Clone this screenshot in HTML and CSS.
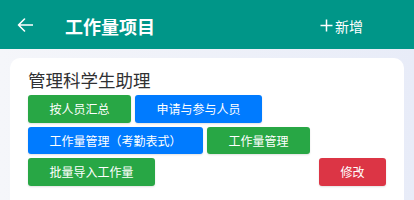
FILE: index.html
```html
<!DOCTYPE html>
<html lang="zh-CN">
<head>
<meta charset="utf-8">
<title>工作量项目</title>
<link rel="stylesheet" href="styles.css">
</head>
<body>
<header class="topbar">
  <span class="back">
    <svg width="16" height="14" viewBox="0 0 16 14"><path d="M15.5 7H1.5M7.5 1L1.5 7L7.5 13" fill="none" stroke="#fff" stroke-width="1.6" stroke-linecap="round" stroke-linejoin="round"/></svg>
  </span>
  <h1 class="title">工作量项目</h1>
  <span class="add">
    <svg class="plus" width="13" height="13" viewBox="0 0 13 13"><path d="M6.5 0.5V12.5M0.5 6.5H12.5" fill="none" stroke="#fff" stroke-width="1.5"/></svg>
    <span>新增</span>
  </span>
</header>
<main class="content">
  <section class="card">
    <h2 class="card-title">管理科学生助理</h2>
    <div class="actions">
      <button class="btn btn-green">按人员汇总</button>
      <button class="btn btn-blue">申请与参与人员</button>
      <button class="btn btn-blue">工作量管理（考勤表式）</button>
      <button class="btn btn-green">工作量管理</button>
      <button class="btn btn-green">批量导入工作量</button>
      <button class="btn btn-red btn-end">修改</button>
    </div>
  </section>
</main>
</body>
</html>
```
FILE: styles.css
```css
* { box-sizing: border-box; }
html, body { margin: 0; padding: 0; }
body {
  width: 414px;
  height: 200px;
  overflow: hidden;
  font-family: "Noto Sans CJK SC", "Noto Sans", sans-serif;
  background: linear-gradient(90deg, #f5f6fa 0%, #e8ecf8 100%);
}
.topbar {
  height: 49px;
  background: #009688;
  display: flex;
  align-items: center;
  padding: 0 51px 0 17px;
  color: #fff;
}
.back { display: flex; align-items: center; width: 16px; }
.title {
  margin: 0 0 0 32px;
  font-size: 18px;
  font-weight: 700;
  line-height: 24px;
  padding-top: 3px;
}
.add {
  margin-left: auto;
  display: flex;
  align-items: center;
  font-size: 14px;
  line-height: 20px;
  padding-top: 2px;
}
.plus { margin-right: 2px; }
.content { padding: 9px 10px 0; }
.card {
  background: #fff;
  border-radius: 10px;
  padding: 10px 18px 40px;
}
.card-title {
  margin: 0 0 3px;
  font-size: 17.5px;
  font-weight: 400;
  line-height: 24px;
  color: #303133;
}
.actions {
  display: flex;
  flex-wrap: wrap;
  gap: 4px;
}
.btn {
  height: 27.5px;
  padding: 0 21.5px;
  border: 0;
  border-radius: 3px;
  font-family: inherit;
  font-size: 12px;
  line-height: 27.5px;
  color: #fff;
  box-shadow: 0 1px 2px rgba(0, 0, 0, 0.12);
}
.btn-green { background: #28a745; }
.btn-blue { background: #007bff; }
.btn-red { background: #dc3545; }
.btn-end { margin-left: auto; }
```
